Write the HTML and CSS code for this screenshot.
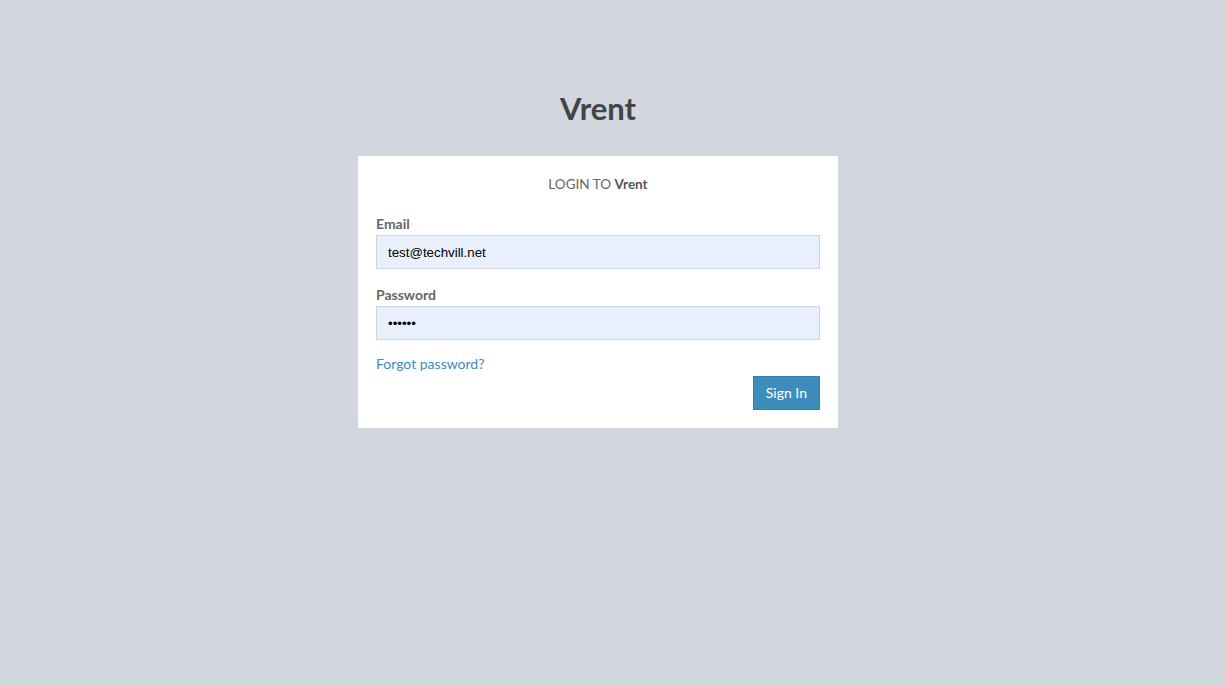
FILE: index.html
```html
<!DOCTYPE html>
<html>
	<head>
		<meta charset="utf-8">
		<title>Vrent | Log in</title>
		<link rel="stylesheet" href="styles.css">
	</head>
<body>
	<div class="login-box">
		<div class="login-logo">Vrent</div>
		<div class="login-box-body">
			<p class="login-box-msg">LOGIN TO <b>Vrent</b></p>
			<form>
				<div class="form-group">
					<label for="email">Email</label>
					<input type="email" id="email" class="form-control" value="test@techvill.net">
				</div>
				<div class="form-group">
					<label for="password">Password</label>
					<input type="password" id="password" class="form-control" value="123456">
				</div>
				<a href="#" class="forgot">Forgot password?</a>
				<div class="actions">
					<button type="button" class="btn-primary">Sign In</button>
				</div>
			</form>
		</div>
	</div>
</body>
</html>
```

FILE: styles.css
```css
*{margin:0;padding:0;box-sizing:border-box;}
body{
	background:#d2d6de;
	font:14px "Lato","Noto Sans",sans-serif;
	color:#666;
	padding-right:30px;
}
a{text-decoration:none;color:#3c8dbc;}
.login-box{
	width:480px;
	margin:0 auto;
	padding-top:86px;
}
.login-logo{
	height:45px;
	line-height:45px;
	margin-bottom:25px;
	text-align:center;
	font-size:31px;
	font-weight:700;
	color:#444;
}
.login-box-body{
	background:#fff;
	padding:18px;
}
.login-box-msg{
	text-align:center;
	line-height:20px;
	margin-bottom:20px;
	font-size:13.5px;
}
.login-box-msg b{color:#555;}
.form-group{margin-bottom:16px;}
label{
	display:block;
	font-weight:700;
	line-height:20px;
	margin-bottom:1px;
	color:#666;
}
.form-control{
	display:block;
	width:100%;
	height:34px;
	padding:6px 11px;
	border:1px solid #cfd4de;
	background:#e8f0fe;
	font:13.3px "Liberation Sans",Arial,sans-serif;
	color:#000;
	outline:none;
}
.forgot{
	display:block;
	width:max-content;
	line-height:20px;
	margin-top:-2px;
}
.actions{
	display:flex;
	justify-content:flex-end;
	margin-top:2px;
}
.btn-primary{
	height:34px;
	padding:0 12px 2px;
	background:#3c8dbc;
	border:1px solid #367fa9;
	color:#fff;
	font:14px "Lato","Noto Sans",sans-serif;
	cursor:pointer;
}
```
